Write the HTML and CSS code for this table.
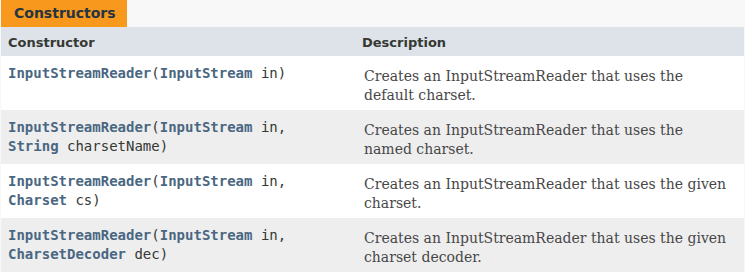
FILE: index.html
```html
<!DOCTYPE html>
<html lang="en">
<head>
  <meta charset="UTF-8">
  <title>Constructors</title>
  <link rel="stylesheet" href="styles.css">
</head>
<body>
  <div class="summary">
    <div class="summary__caption">
      <span class="tab">Constructors</span>
    </div>
    <div class="summary__table">
      <div class="head">Constructor</div>
      <div class="head">Description</div>

      <div class="cell code"><a href="#">InputStreamReader</a>(<a href="#">InputStream</a>&nbsp;in)</div>
      <div class="cell desc"><div class="block">Creates an InputStreamReader that uses the default charset.</div></div>

      <div class="cell code alt"><a href="#">InputStreamReader</a>(<a href="#">InputStream</a>&nbsp;in, <a href="#">String</a>&nbsp;charsetName)</div>
      <div class="cell desc alt"><div class="block">Creates an InputStreamReader that uses the named charset.</div></div>

      <div class="cell code"><a href="#">InputStreamReader</a>(<a href="#">InputStream</a>&nbsp;in, <a href="#">Charset</a>&nbsp;cs)</div>
      <div class="cell desc"><div class="block">Creates an InputStreamReader that uses the given charset.</div></div>

      <div class="cell code alt"><a href="#">InputStreamReader</a>(<a href="#">InputStream</a>&nbsp;in, <a href="#">CharsetDecoder</a>&nbsp;dec)</div>
      <div class="cell desc alt"><div class="block">Creates an InputStreamReader that uses the given charset decoder.</div></div>
    </div>
  </div>
</body>
</html>
```

FILE: styles.css
```css
body {
  margin: 0;
  background-color: #f8f8f8;
  font-family: "DejaVu Sans", sans-serif;
  font-size: 14px;
  color: #353833;
}

* {
  box-sizing: border-box;
}

.summary {
  width: 744px;
  padding-left: 1px;
}

.summary__caption {
  display: flex;
  height: 27px;
}

.tab {
  display: block;
  width: 126px;
  height: 27px;
  padding: 5px 0 0 13px;
  background-color: #f8981d;
  color: #253441;
  font-weight: bold;
  line-height: 17px;
  white-space: nowrap;
}

.summary__table {
  display: grid;
  grid-template-columns: 354px 1fr;
}

.head {
  height: 29px;
  padding: 8px 3px 0 7px;
  background-color: #dee3e9;
  font-size: 13px;
  font-weight: bold;
  line-height: 16px;
}

.cell {
  height: 54px;
  padding: 8px 3px 0 7px;
  background-color: #fff;
  line-height: 19px;
}

.cell.alt {
  background-color: #eeeeef;
}

.code {
  font-family: "DejaVu Sans Mono", monospace;
  font-size: 14px;
}

.code a {
  color: #4a6782;
  font-weight: bold;
  text-decoration: none;
}

.desc {
  padding: 8px 13px 0 9px;
}

.block {
  margin-top: 3px;
  font-family: "DejaVu Serif", serif;
  font-size: 14px;
  color: #474747;
}
```
